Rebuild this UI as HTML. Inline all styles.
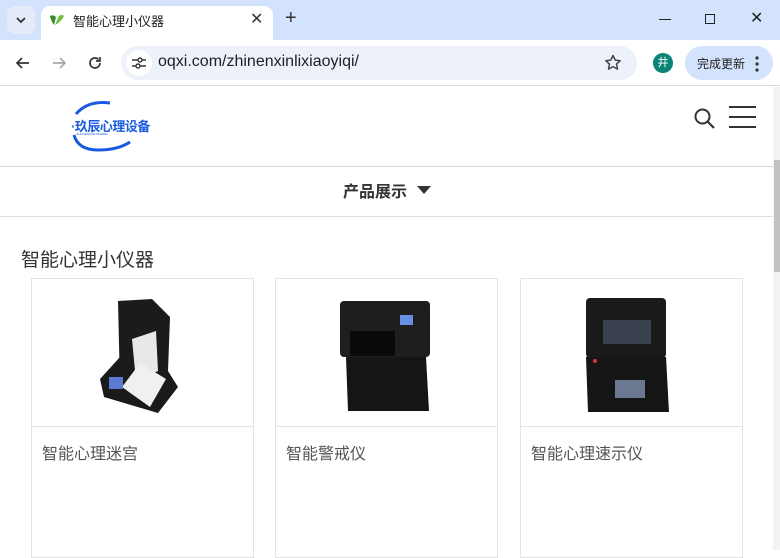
<!DOCTYPE html>
<html><head><meta charset="utf-8"><style>
*{margin:0;padding:0;box-sizing:border-box}
body{width:780px;height:550px;overflow:hidden;background:#fff;font-family:"Liberation Sans","Noto Sans CJK SC",sans-serif;position:relative}
.abs{position:absolute}
.card{position:absolute;top:278px;width:223px;height:280px;border:1px solid #e3e3e8;background:#fff}
.card .img{height:148px;border-bottom:1px solid #e3e3e8;position:relative}
.card .t{position:absolute;left:10px;top:161px;font-size:16px;color:#555}
</style></head><body>
<div class="abs" style="left:0;top:0;width:780px;height:40px;background:#d3e3fd"></div>
<div class="abs" style="left:7px;top:6px;width:28px;height:28px;background:#e4ecfa;border-radius:8px"></div>
<svg class="abs" style="left:14px;top:14px" width="14" height="12"><path d="M3 4l4 4 4-4" stroke="#333" stroke-width="1.8" fill="none"/></svg>
<div class="abs" style="left:41px;top:6px;width:232px;height:34px;background:#fff;border-radius:9px 9px 0 0"></div>
<svg class="abs" style="left:49px;top:13px" width="16" height="14"><path d="M1 3 Q4 1 7 4 L5 12 Q2 8 1 3Z" fill="#3a8a2a"/><path d="M6 12 L10 3 Q13 1 15 3 Q12 9 6 12Z" fill="#6cbf3a"/></svg>
<div class="abs" style="left:73px;top:11px;font-size:13px;color:#222">智能心理小仪器</div>
<div class="abs" style="left:250px;top:9px;font-size:16px;color:#333">✕</div>
<div class="abs" style="left:285px;top:7px;font-size:20px;color:#333">+</div>
<div class="abs" style="left:659px;top:19px;width:12px;height:1.3px;background:#222"></div>
<div class="abs" style="left:705px;top:14px;width:10px;height:10px;border:1.3px solid #222"></div>
<div class="abs" style="left:750px;top:8px;font-size:16px;color:#222">✕</div>
<div class="abs" style="left:0;top:40px;width:780px;height:46px;background:#fff;border-bottom:1px solid #dcdcdc"></div>
<svg class="abs" style="left:14px;top:55px" width="18" height="16"><path d="M15 8H3M8 3L3 8l5 5" stroke="#333" stroke-width="1.7" fill="none"/></svg>
<svg class="abs" style="left:50px;top:55px" width="18" height="16"><path d="M3 8h12M10 3l5 5-5 5" stroke="#aaa" stroke-width="1.7" fill="none"/></svg>
<svg class="abs" style="left:86px;top:54px" width="18" height="18"><path d="M14 9a5 5 0 1 1-1.5-3.6" stroke="#333" stroke-width="1.7" fill="none"/><path d="M14 3v4h-4" fill="none" stroke="#333" stroke-width="1.7"/></svg>
<div class="abs" style="left:121px;top:46px;width:516px;height:34px;background:#ecf1fa;border-radius:17px"></div>
<div class="abs" style="left:126px;top:50px;width:26px;height:26px;background:#fff;border-radius:13px"></div>
<svg class="abs" style="left:131px;top:56px" width="16" height="14"><path d="M1 4h6M11 4h4M1 10h4M9 10h6" stroke="#333" stroke-width="1.5"/><circle cx="9" cy="4" r="2" fill="none" stroke="#333" stroke-width="1.4"/><circle cx="7" cy="10" r="2" fill="none" stroke="#333" stroke-width="1.4"/></svg>
<div class="abs" style="left:158px;top:53px;font-size:16px;color:#1f1f1f">oqxi.com/zhinenxinlixiaoyiqi/</div>
<svg class="abs" style="left:604px;top:54px" width="18" height="18"><path d="M9 1.5l2.2 4.6 5 .6-3.7 3.4 1 5L9 12.6 4.5 15.1l1-5L1.8 6.7l5-.6z" fill="none" stroke="#444" stroke-width="1.5" stroke-linejoin="round"/></svg>
<div class="abs" style="left:653px;top:53px;width:20px;height:20px;border-radius:10px;background:#0b8478;color:#fff;font-size:11px;text-align:center;line-height:20px">井</div>
<div class="abs" style="left:685px;top:46px;width:88px;height:34px;background:#d3e3fd;border-radius:17px"></div>
<div class="abs" style="left:697px;top:55px;font-size:12px;color:#1f1f1f">完成更新</div>
<svg class="abs" style="left:754px;top:55px" width="6" height="18"><circle cx="3" cy="3" r="1.6" fill="#333"/><circle cx="3" cy="9" r="1.6" fill="#333"/><circle cx="3" cy="15" r="1.6" fill="#333"/></svg>
<div class="abs" style="left:773px;top:87px;width:7px;height:463px;background:#f3f3f3"></div>
<div class="abs" style="left:774px;top:160px;width:6px;height:112px;background:#c1c1c1"></div>
<svg class="abs" style="left:68px;top:100px" width="90" height="54"><path d="M42 3 Q20 0 8 14" stroke="#1a5ae0" stroke-width="3" fill="none"/><path d="M6 35 Q10 50 30 50 Q50 50 62 42" stroke="#1a5ae0" stroke-width="3" fill="none"/></svg>
<div class="abs" style="left:71px;top:116px;font-size:13px;font-weight:bold;color:#1a5ae0;letter-spacing:-0.5px">·玖辰心理设备</div>
<div class="abs" style="left:76px;top:132px;font-size:3px;color:#1a5ae0">JIUCHENXINLISHEBEI</div>
<svg class="abs" style="left:693px;top:107px" width="24" height="24"><circle cx="9.5" cy="9.5" r="7" stroke="#333" stroke-width="2" fill="none"/><path d="M15 15l6 6" stroke="#333" stroke-width="2.2"/></svg>
<div class="abs" style="left:729px;top:106px;width:27px;height:2px;background:#333"></div>
<div class="abs" style="left:729px;top:116px;width:27px;height:2px;background:#333"></div>
<div class="abs" style="left:729px;top:126px;width:27px;height:2px;background:#333"></div>
<div class="abs" style="left:0;top:166px;width:773px;height:1px;background:#d6d6d6"></div>
<div class="abs" style="left:343px;top:178px;font-size:16px;font-weight:bold;color:#333">产品展示</div>
<svg class="abs" style="left:417px;top:186px" width="14" height="9"><path d="M0 0h14L7 8z" fill="#333"/></svg>
<div class="abs" style="left:0;top:216px;width:773px;height:1px;background:#e0e0e0"></div>
<div class="abs" style="left:21px;top:245px;font-size:19px;color:#333">智能心理小仪器</div>
<div class="card" style="left:31px"><div class="img"><svg width="223" height="148">
<path d="M86 22 L120 20 L138 38 L136 92 L122 118 L88 108 Z" fill="#1b1b1b"/>
<path d="M104 78 L136 92 L146 108 L126 134 L72 118 L68 100 L88 78 Z" fill="#1a1a1a"/>
<path d="M100 60 L124 52 L126 92 L104 102Z" fill="#e8e8e8"/>
<path d="M90 108 L108 84 L134 100 L118 128Z" fill="#f0f0f0"/>
<rect x="77" y="98" width="14" height="12" fill="#5b7bd0"/>
</svg></div><div class="t">智能心理迷宫</div></div>
<div class="card" style="left:275px"><div class="img"><svg width="223" height="148">
<rect x="64" y="22" width="90" height="56" rx="4" fill="#1e1e1e"/>
<rect x="74" y="52" width="45" height="25" fill="#0a0a0a"/>
<rect x="124" y="36" width="13" height="10" fill="#6a8fe0"/>
<path d="M70 78 L150 78 L153 132 L72 132Z" fill="#151515"/>
</svg></div><div class="t">智能警戒仪</div></div>
<div class="card" style="left:520px"><div class="img"><svg width="223" height="148">
<rect x="65" y="19" width="80" height="60" rx="4" fill="#1a1a1a"/>
<rect x="82" y="41" width="48" height="24" fill="#3a4250"/>
<path d="M65 78 L145 78 L148 133 L67 133Z" fill="#151515"/>
<rect x="94" y="101" width="30" height="18" fill="#6c7890"/>
<circle cx="74" cy="82" r="2" fill="#d33"/>
</svg></div><div class="t">智能心理速示仪</div></div>
</body></html>
